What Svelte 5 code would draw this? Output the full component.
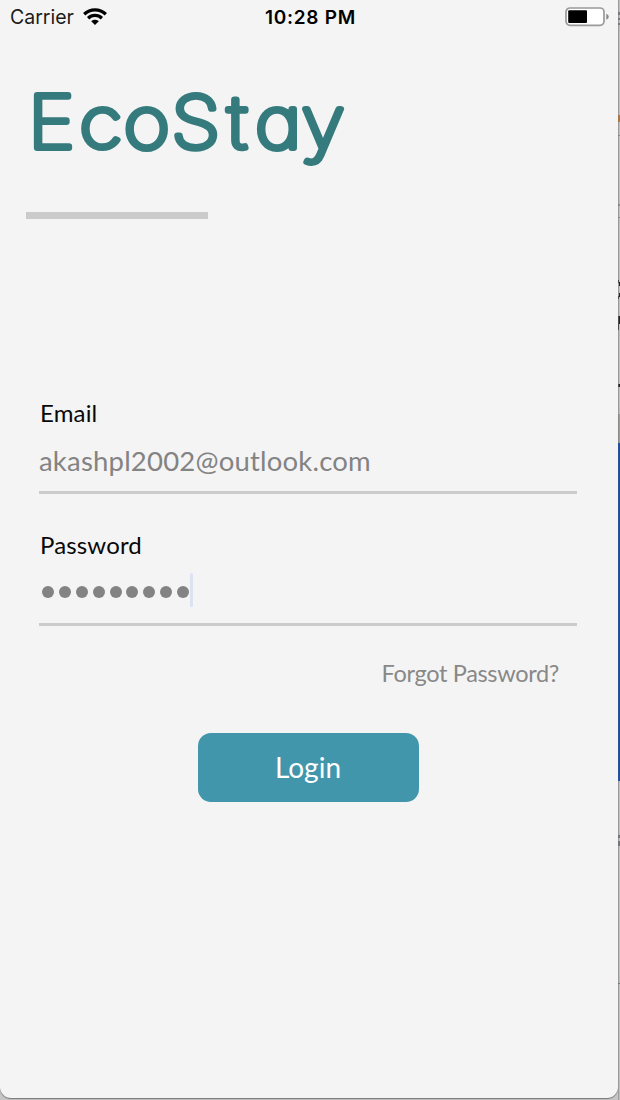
<script>
  let email = $state('akashpl2002@outlook.com');
  const passwordLength = 9;
</script>

<div class="desktop">
  <div class="edge" aria-hidden="true">
    <svg width="2" height="1100" viewBox="0 0 2 1100" shape-rendering="crispEdges">
      <path fill="#bfc0c1" d="M0 0h2v1100H0z" />
      <path fill="#77797d" d="M0 12h2v3H0zm0 6h2v2H0zm0 5h2v2H0z" />
      <path fill="#c77430" d="M0 115h2v7H0z" />
      <path fill="#8c8c8c" d="M0 135h2v1H0zm0 69h2v2H0zm0 13h2v1H0z" />
      <path fill="#222" d="M0 280h1v3H0zm1 2h1v4H1zm0 11h1v4H1zm-1 3h1v3H0zm0 20h2v8H1v6H0zm0 68h2v3H0z" />
      <path fill="#9d9d9b" d="M0 414h2v29H0z" />
      <path fill="#74777a" d="M0 835h2v3H0zm0 6h2v5H0zm0 142h2v1H0z" />
      <path fill="#777" opacity=".45" d="M0 0h1v1100H0z" />
      <path fill="#1d4f9f" d="M0 443h2v338H0z" />
    </svg>
  </div>
  <main class="phone">
    <header class="status">
      <div class="carrier">
        <span>Carrier</span>
        <svg class="wifi" width="24" height="18" viewBox="0 0 24 18">
          <g fill="none" stroke="#000" stroke-width="3.3">
            <path d="M1.2 6.2C7.2.4 16.8.4 22.8 6.2" />
            <path d="M5.1 10.2c4-3.8 9.8-3.8 13.8 0" />
          </g>
          <path d="M8.2 13.3c2.2-2 5.4-2 7.6 0L12 17z" />
        </svg>
      </div>
      <time>10:28 PM</time>
      <svg class="battery" width="44" height="20" viewBox="0 0 44 20">
        <rect x="1" y="1" width="38" height="17.3" rx="4" fill="#fff" stroke="#999" stroke-width="1.7" />
        <rect x="3.2" y="3.2" width="18.8" height="12.8" rx="1" />
        <path d="M41.3 6.8q2.5 1 2.5 3t-2.5 3z" fill="#888" />
      </svg>
    </header>
    <h1>
      <svg width="350" height="100" viewBox="0 0 350 100" role="img">
        <text transform="scale(1.1 1)" x="25.8 72.3 112.4 156 207 232 274" y="65.5">EcoStay</text>
      </svg>
    </h1>
    <div class="rule"></div>
    <form onsubmit={(e) => e.preventDefault()}>
      <section class="field">
        <div class="label">Email</div>
        <div class="value">{email}</div>
      </section>
      <section class="field password">
        <div class="label">Password</div>
        <div class="value dots">
          {#each Array(passwordLength) as _}<i></i>{/each}<b></b>
        </div>
      </section>
      <a href="#forgot">Forgot Password?</a>
      <button>Login</button>
    </form>
  </main>
</div>

<style>
  :global(body) { margin: 0; }
  .desktop {
    display: grid;
    grid-template-columns: 618px 2px;
    height: 1100px;
    overflow: hidden;
    background: #c6c6c6;
    font-family: Lato, sans-serif;
  }
  .edge { grid-column: 2; grid-row: 1; }
  .edge svg { display: block; }
  .phone {
    grid-column: 1;
    grid-row: 1;
    box-sizing: border-box;
    height: 1098px;
    background: #f4f4f4;
    border-radius: 0 0 11px 11px;
    box-shadow: 0 1px 1px #777;
  }
  .status {
    display: grid;
    grid-template-columns: 1fr auto 1fr;
    align-items: center;
    box-sizing: border-box;
    height: 34px;
    padding: 0 9px 0 10px;
    font-family: Inter, sans-serif;
    font-size: 19.5px;
  }
  .carrier { display: flex; align-items: center; gap: 9px; color: #1b1b1b; }
  time { font-weight: 600; font-size: 19px; letter-spacing: .7px; margin-left: 2px; }
  .battery { justify-self: end; }
  h1 { margin: 48px 0 0; height: 100px; }
  h1 svg { display: block; overflow: visible; }
  h1 text {
    font: 100 72px Inter, sans-serif;
    font-feature-settings: "cv11";
    fill: #357b7d;
    stroke: #357b7d;
    stroke-width: 6.1px;
    stroke-linejoin: round;
    stroke-linecap: round;
  }
  .rule { width: 182px; height: 7px; margin: 30px 0 0 26px; background: #cbcbcb; }
  form { display: flex; flex-direction: column; margin: 177px 41px 0 39px; }
  .field { height: 95px; border-bottom: 3px solid #cbcbcb; }
  .password { margin-top: 34px; }
  .label { height: 32px; line-height: 33px; padding-left: 1px; font-size: 24px; letter-spacing: .15px; color: #080808; }
  .value { height: 36px; margin-top: 14px; line-height: 37px; font-size: 27.5px; letter-spacing: .2px; color: #838383; }
  .dots { display: flex; align-items: center; gap: 4.9px; padding-left: 3px; }
  .dots i { width: 12px; height: 12px; border-radius: 50%; background: #838383; }
  .dots b { width: 3px; height: 34px; margin: -4px 0 0 -4px; border-radius: 2px; background: #dde2f3; }
  a { align-self: flex-end; margin: 31px 18px 0 0; line-height: 32px; font-size: 23.5px; letter-spacing: -.32px; color: #888; text-decoration: none; }
  button {
    width: 221px;
    height: 69px;
    margin: 44px 0 0 159px;
    padding: 0 1px 2px 0;
    border: 0;
    border-radius: 13px;
    background: #4296ac;
    color: #fff;
    font: 28px Lato, sans-serif;
  }
</style>
